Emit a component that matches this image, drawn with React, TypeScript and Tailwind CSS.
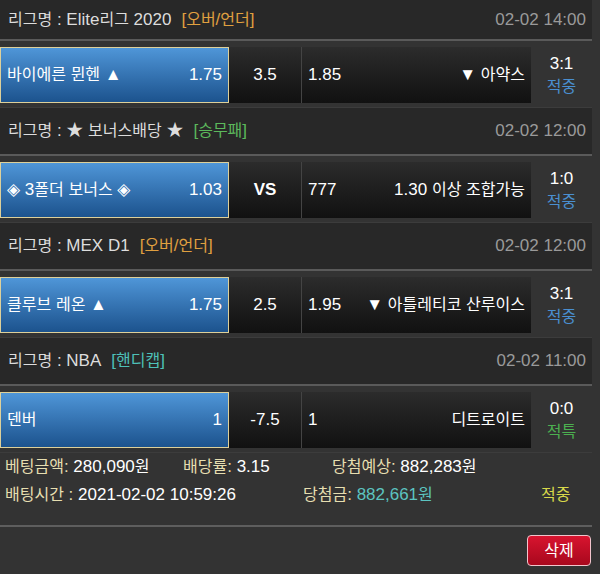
import React from "react";

type Match = {
  league: string;
  tag: string;
  tagClass: string;
  time: string;
  home: string;
  homeOdds: string;
  mid: string;
  midBold?: boolean;
  awayOdds: string;
  away: string;
  score: string;
  result: string;
  resultClass: string;
};

const MATCHES: Match[] = [
  {
    league: "Elite리그 2020",
    tag: "[오버/언더]",
    tagClass: "text-[#e0a040]",
    time: "02-02 14:00",
    home: "바이에른 뮌헨 ▲",
    homeOdds: "1.75",
    mid: "3.5",
    awayOdds: "1.85",
    away: "▼ 아약스",
    score: "3:1",
    result: "적중",
    resultClass: "text-[#4a8fd0]",
  },
  {
    league: "★ 보너스배당 ★",
    tag: "[승무패]",
    tagClass: "text-[#5cb85c]",
    time: "02-02 12:00",
    home: "◈ 3폴더 보너스 ◈",
    homeOdds: "1.03",
    mid: "VS",
    midBold: true,
    awayOdds: "777",
    away: "1.30 이상 조합가능",
    score: "1:0",
    result: "적중",
    resultClass: "text-[#4a8fd0]",
  },
  {
    league: "MEX D1",
    tag: "[오버/언더]",
    tagClass: "text-[#e0a040]",
    time: "02-02 12:00",
    home: "클루브 레온 ▲",
    homeOdds: "1.75",
    mid: "2.5",
    awayOdds: "1.95",
    away: "▼ 아틀레티코 산루이스",
    score: "3:1",
    result: "적중",
    resultClass: "text-[#4a8fd0]",
  },
  {
    league: "NBA",
    tag: "[핸디캡]",
    tagClass: "text-[#4ec0b8]",
    time: "02-02 11:00",
    home: "덴버",
    homeOdds: "1",
    mid: "-7.5",
    awayOdds: "1",
    away: "디트로이트",
    score: "0:0",
    result: "적특",
    resultClass: "text-[#4caf50]",
  },
];

// hangul glyphs in Noto CJK are full width, so shrink them a bit
function K({ text }: { text: string }) {
  const parts = text.split(/([\uAC00-\uD7A3]+)/);
  return (
    <>
      {parts.map((p, i) =>
        /[\uAC00-\uD7A3]/.test(p) ? (
          <span key={i} className="text-[16px]">
            {p}
          </span>
        ) : (
          <React.Fragment key={i}>{p}</React.Fragment>
        )
      )}
    </>
  );
}

function MatchBlock({ m, first }: { m: Match; first: boolean }) {
  return (
    <div>
      {/* league header */}
      <div
        className={
          "mr-2 flex items-center justify-between bg-[#282828] pl-2 pr-[6px] " +
          (first ? "h-[39px]" : "h-[46px]")
        }
      >
        <div className="flex items-center whitespace-nowrap text-[#dddddd]">
          <span>
            <K text={"리그명 : " + m.league} />
          </span>
          <span className={"ml-[10px] " + m.tagClass}>
            <K text={m.tag} />
          </span>
        </div>
        <span className="text-[#9a9a9a]">{m.time}</span>
      </div>
      <div className="mr-2 h-[2px] bg-[#5a5a5a]" />

      {/* match row */}
      <div className="flex h-[66px] pb-[4px] pt-[6px]">
        <div className="flex w-[229px] items-center justify-between border border-[#ddd09a] bg-gradient-to-b from-[#4f96d8] to-[#1c538e] pl-[6px] pr-[6px] text-white">
          <span className="whitespace-nowrap">
            <K text={m.home} />
          </span>
          <span>{m.homeOdds}</span>
        </div>
        <div
          className={
            "flex w-[72px] items-center justify-center bg-gradient-to-b from-[#2c2c2c] to-[#111111] text-white " +
            (m.midBold ? "font-bold" : "")
          }
        >
          {m.mid}
        </div>
        <div className="flex w-[230px] items-center justify-between border-l border-[#444444] bg-gradient-to-b from-[#2c2c2c] to-[#111111] pl-[6px] pr-[6px] text-white">
          <span>{m.awayOdds}</span>
          <span className="whitespace-nowrap">
            <K text={m.away} />
          </span>
        </div>
        <div className="mr-2 flex flex-1 flex-col items-center justify-center leading-[23px]">
          <span className="text-white">{m.score}</span>
          <span className={m.resultClass}>
            <K text={m.result} />
          </span>
        </div>
      </div>
      <div className="mr-2 h-px bg-[#3c3c3c]" />
    </div>
  );
}

export default function App() {
  return (
    <div className="h-[574px] w-[600px] overflow-hidden bg-[#333333] font-['Liberation_Sans','Noto_Sans_CJK_KR','DejaVu_Sans',sans-serif] text-[17px]">
      {MATCHES.map((m, i) => (
        <MatchBlock key={i} m={m} first={i === 0} />
      ))}

      {/* bet summary */}
      <div className="h-[72px] whitespace-nowrap">
        <div className="flex h-[28px] items-center">
          <div className="w-[183px] pl-[5px]">
            <span className="text-[#e6deb0]">
              <K text="베팅금액: " />
            </span>
            <span className="text-white">
              <K text="280,090원" />
            </span>
          </div>
          <div className="w-[149px]">
            <span className="text-[#e6deb0]">
              <K text="배당률: " />
            </span>
            <span className="text-white">3.15</span>
          </div>
          <div>
            <span className="text-[#e6deb0]">
              <K text="당첨예상: " />
            </span>
            <span className="text-white">
              <K text="882,283원" />
            </span>
          </div>
        </div>
        <div className="flex h-[28px] items-center">
          <div className="w-[303px] pl-[5px]">
            <span className="text-[#e6deb0]">
              <K text="배팅시간 : " />
            </span>
            <span className="text-white">2021-02-02 10:59:26</span>
          </div>
          <div className="w-[238px]">
            <span className="text-[#e6deb0]">
              <K text="당첨금: " />
            </span>
            <span className="text-[#5cc4c0]">
              <K text="882,661원" />
            </span>
          </div>
          <span className="text-[#d8d84a]">
            <K text="적중" />
          </span>
        </div>
      </div>
      <div className="mr-2 h-[2px] bg-[#5e5e5e]" />

      <div className="flex justify-end pr-[9px] pt-[8px]">
        <button className="flex h-[31px] w-[64px] items-center justify-center rounded-[4px] border border-[#f2c4cc] bg-gradient-to-b from-[#d8142f] to-[#a8081d] text-white">
          <K text="삭제" />
        </button>
      </div>
    </div>
  );
}
